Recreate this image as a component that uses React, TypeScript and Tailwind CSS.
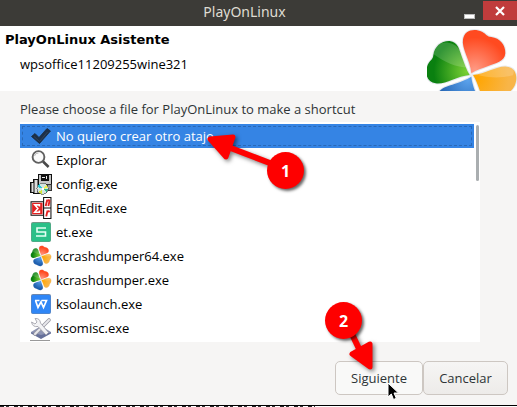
import { useState, type ReactNode } from "react";

const PETAL =
  "M154 160 C150 120 124 85 129 58 C133 30 162 24 186 35 C200 42 200 50 214 51 C240 54 257 75 256 100 C254 126 226 130 205 138 C186 145 170 150 154 160Z";

function Clover({ id, viewBox, className }: { id: string; viewBox: string; className: string }) {
  const petals = [
    { name: "red", angle: 0, near: "#ff9a84", far: "#ff4a20" },
    { name: "amber", angle: 90, near: "#ffa500", far: "#f8b548" },
    { name: "blue", angle: 180, near: "#5ba2ec", far: "#1f5fae" },
    { name: "green", angle: 270, near: "#7ad034", far: "#0a8010" },
  ];
  return (
    <svg viewBox={viewBox} className={className} aria-hidden="true">
      <defs>
        {petals.map((p) => (
          <radialGradient key={p.name} id={`${id}-${p.name}`} gradientUnits="userSpaceOnUse" cx="165" cy="150" r="115">
            <stop offset="0" stopColor={p.near} />
            <stop offset="0.85" stopColor={p.far} />
          </radialGradient>
        ))}
      </defs>
      {petals.map((p) => (
        <g key={p.name} transform={`rotate(${p.angle} 154 165)`}>
          <path d={PETAL} fill="none" stroke="#e6e9ee" strokeWidth="6" />
          <path d={PETAL} fill={`url(#${id}-${p.name})`} />
        </g>
      ))}
      <path d="M40 102 C75 128 110 142 143 143 C137 112 120 82 98 72 C76 62 46 68 40 92Z" fill="#fff" opacity=".17" />
      <path d="M165 163 C210 176 250 174 279 166 C288 142 268 132 245 138 C218 144 190 154 165 163Z" fill="#fff" opacity=".17" />
    </svg>
  );
}

const iconClass = "size-[22px] shrink-0";

const CheckIcon = () => (
  <svg viewBox="0 0 22 22" className={iconClass} aria-hidden="true">
    <path d="M1.500 11.500 L5 8.500 L9 12.500 L17 3.500 L20.500 6 L9.500 18.500Z" fill="#1d3047" stroke="#1b2a3c" strokeWidth=".8" />
    <path d="M4 11.500 L9.500 16.500 L17.500 7" fill="none" stroke="#30435b" strokeWidth="1" />
  </svg>
);

const SearchIcon = () => (
  <svg viewBox="0 0 22 22" className={iconClass} aria-hidden="true">
    <circle cx="8.500" cy="8" r="5.900" fill="#fafafa" stroke="#606060" strokeWidth="1.900" />
    <path d="M13 12.500 L18.600 18" stroke="#494949" strokeWidth="2.600" />
    <path d="M4.500 7 A4 4 0 0 1 8.500 4" fill="none" stroke="#bbb" />
  </svg>
);

const SetupIcon = () => (
  <svg viewBox="0.500 0 21 21" className={iconClass} aria-hidden="true" shapeRendering="crispEdges">
    <path d="M1 9h3V6h6v14H4v-1H1z" fill="#777" stroke="#111" strokeWidth="1" />
    <path d="M2 10h1v8H2zM5 7h2v12H5z" fill="#ddd" />
    <path d="M9 1h12v10H9z" fill="#c5c5c5" stroke="#111" strokeWidth="1" />
    <path d="M11 2h8v6h-8z" fill="#111" />
    <path d="M12 4h3v1h-3zM16 3h1v3h-1z" fill="#eee" />
    <path d="M17 11h4v6h-4z" fill="#999" stroke="#333" strokeWidth="1" />
    <circle cx="12.500" cy="15" r="5.400" fill="#d3e6df" stroke="#444" strokeWidth=".6" />
    <path d="M12.500 15 L7.500 13.500 L9.500 10.500Z" fill="#28c7d8" />
    <path d="M12.500 15 L16.500 11.500 L17.500 14.500Z" fill="#eef24a" />
    <path d="M12.500 15 L8.500 18.500 L11.500 20Z" fill="#d8e63a" />
    <path d="M12.500 15 L16.500 18.500 L17.500 15.500Z" fill="#29b98f" />
    <path d="M12 14h2v2h-2z" fill="#fff" />
  </svg>
);

const EquationIcon = () => (
  <svg viewBox="0.500 0 21 21" className={iconClass} aria-hidden="true">
    <path d="M1.500 4.500h12v13h-12z" fill="#fff" stroke="#111" />
    <path d="M2.500 5.500h10v11h-10z" fill="#e32222" />
    <path d="M9.500 9V7.500H5L8 11 5 14.500H9.500V13" fill="none" stroke="#fff" strokeWidth="1.500" />
    <path d="M13.500 .5h7v10h-7zM13.500 10.500h7v10h-7z" fill="#fff" stroke="#111" />
    <path d="M15.500 8.500l1.500-6M16.500 4q3-2 2.500 .5l-1 4M16 18.500l1.200-5.500M16.800 14.500q1-1.500 2.500-.5" fill="none" stroke="#e32222" strokeWidth="1.800" />
  </svg>
);

const SheetIcon = () => (
  <svg viewBox="0 0 22 22" className={iconClass} aria-hidden="true">
    <rect x="1" y="1" width="20" height="20" rx="2" fill="#6e9a87" />
    <rect x="1.500" y="2" width="19" height="18.500" rx="1.500" fill="#2bc088" />
    <path d="M16 7H7v4h8.500v4H6" fill="none" stroke="#e6fff4" strokeWidth="1.600" />
  </svg>
);

const WriterIcon = () => (
  <svg viewBox="0 0 22 22" className={iconClass} aria-hidden="true">
    <rect x="1" y="1" width="20" height="20" rx="2" fill="#6d87ac" />
    <rect x="1.500" y="2" width="19" height="18.500" rx="1.500" fill="#2f86f6" />
    <path d="M5 7.500h4.500M5.500 7.500L8 14.500 11 9l2.500 5.500L16.500 7.500H11.500" fill="none" stroke="#fff" strokeWidth="1.700" />
  </svg>
);

const ToolsIcon = () => (
  <svg viewBox="0 0 22 22" className={iconClass} aria-hidden="true">
    <path d="M1 15 L11 9 L21 15 L11 20Z" fill="#8e95b4" />
    <path d="M1 15 L11 18 L21 15 V16.500 L11 22 L1 16.500Z" fill="#66709a" />
    <path d="M19 3 L5 17" stroke="#9a9aa4" strokeWidth="3.600" strokeLinecap="round" />
    <path d="M19 3 L5 17" stroke="#e8e8ec" strokeWidth="2" strokeLinecap="round" />
    <path d="M5 1.500 Q10 1 10.500 6 L18.500 15.500 L16 18 L8 9.500 Q2.500 10.500 1.500 5 L5 7 L7 5Z" fill="#f3f3f5" stroke="#9a9aa4" strokeWidth=".8" />
  </svg>
);

const files: { name: string; icon: ReactNode }[] = [
  { name: "No quiero crear otro atajo", icon: <CheckIcon /> },
  { name: "Explorar", icon: <SearchIcon /> },
  { name: "config.exe", icon: <SetupIcon /> },
  { name: "EqnEdit.exe", icon: <EquationIcon /> },
  { name: "et.exe", icon: <SheetIcon /> },
  { name: "kcrashdumper64.exe", icon: <Clover id="dump64" viewBox="16 20 276 290" className={iconClass} /> },
  { name: "kcrashdumper.exe", icon: <Clover id="dump" viewBox="16 20 276 290" className={iconClass} /> },
  { name: "ksolaunch.exe", icon: <WriterIcon /> },
  { name: "ksomisc.exe", icon: <ToolsIcon /> },
];

function Marker({ label, className }: { label: string; className: string }) {
  return (
    <span
      className={`absolute flex size-[37px] items-center justify-center rounded-full bg-[#fe0000] font-['Noto_Sans',sans-serif] text-base font-bold text-white shadow-[2px_2px_3px_rgba(0,0,0,0.6)] ${className}`}
    >
      {label}
    </span>
  );
}

export default function App() {
  const [selected, setSelected] = useState(0);
  return (
    <div className="relative overflow-hidden bg-[#f6f5f4] font-['Open_Sans','Noto_Sans',sans-serif] text-[13px] leading-5 text-[#2e3436]">
      <header className="grid h-[26px] grid-cols-[1fr_auto_1fr] bg-[#3c3b37]">
        <span className="col-start-2 pr-7 font-['Noto_Sans',sans-serif] text-[14px] leading-6 text-[#dfdbd2]">PlayOnLinux</span>
        <div className="flex items-start justify-end">
          <button type="button" aria-label="Minimizar" className="flex h-5 w-[27px] items-end justify-center pt-3 pb-px">
            <span className="h-[5px] w-[11px] border border-[#bbb] bg-white" />
          </button>
          <button type="button" aria-label="Cerrar" className="mt-px flex h-[19px] w-[34px] items-center justify-center bg-[#c03c3c]">
            <svg viewBox="0 0 10 10" className="size-[10px]" aria-hidden="true">
              <path d="M1 1 L9 9 M9 1 L1 9" stroke="#fff" strokeWidth="2.200" />
            </svg>
          </button>
        </div>
      </header>

      <section className="flex h-[65px] justify-between bg-white text-black">
        <div className="pt-1 pl-[5px]">
          <h1 className="font-['DejaVu_Sans',sans-serif] text-[13px] font-bold">PlayOnLinux Asistente</h1>
          <p className="pt-1 pl-[15px]">wpsoffice11209255wine321</p>
        </div>
        <Clover id="logo" viewBox="21 18 270 195" className="h-[65px] w-[90px] shrink-0" />
      </section>

      <main className="px-5 pt-2">
        <p id="prompt" className="pb-[3px]">Please choose a file for PlayOnLinux to make a shortcut</p>
        <div className="mr-[17px] flex h-[220px] overflow-hidden bg-white pt-[2px]">
          <ul role="listbox" aria-labelledby="prompt" className="min-w-0 flex-1 text-black">
            {files.map((file, i) => (
              <li
                key={file.name}
                role="option"
                aria-selected={i === selected}
                onClick={() => setSelected(i)}
                className={
                  i === selected
                    ? "h-6 bg-[#3584e4] p-[2px] text-white"
                    : "h-6 p-[2px]"
                }
              >
                <div
                  className={
                    i === selected
                      ? "flex h-5 items-center gap-1 border border-dashed border-[#2a69b6] pl-[7px]"
                      : "flex h-5 items-center gap-1 border border-transparent pl-[7px]"
                  }
                >
                  {file.icon}
                  <span>{file.name}</span>
                </div>
              </li>
            ))}
            <li role="presentation" className="ml-[10px] h-px w-5 bg-[#999]" />
          </ul>
          <div className="w-[6px] pt-px pl-[2px]">
            <div className="h-14 w-[3px] rounded-full bg-[#aaaeb0]" />
          </div>
        </div>
      </main>

      <footer className="flex justify-end px-[9px] pt-[19px] pb-[10px]">
        <button type="button" className="h-[34px] w-[88px] rounded-[5px] border border-[#cdc7c2] bg-[#f9f9f8]">
          Siguiente
        </button>
        <button type="button" className="h-[34px] w-[85px] rounded-[5px] border border-[#cdc7c2] bg-linear-to-t from-[#edebe9] to-[#f6f5f4]">
          Cancelar
        </button>
      </footer>
      <div className="h-[2px] border-t border-black bg-white">
        <div className="h-px w-[315px] bg-[repeating-linear-gradient(90deg,#222_0_4px,#fff_4px_6px,#333_6px_9px,#fff_9px_14px)]" />
      </div>

      <svg viewBox="0 0 517 407" className="pointer-events-none absolute top-0 left-0 h-[407px] w-[517px] drop-shadow-[2px_2px_2px_rgba(0,0,0,0.5)]" aria-hidden="true">
        <g fill="#fe0000" stroke="#fe0000" strokeLinejoin="round">
          <path d="M228 147 L275 165" strokeWidth="6" />
          <path d="M210 139 L233 137 L226 157Z" strokeWidth="5" />
          <path d="M350 330 L362 355" strokeWidth="6" />
          <path d="M370 367 L352 354 L370 344Z" strokeWidth="5" />
        </g>
      </svg>
      <Marker label="1" className="top-[152px] left-[267px]" />
      <Marker label="2" className="top-[302px] left-[325px]" />
      <svg viewBox="0 0 13 19" className="pointer-events-none absolute top-[382px] left-[387px] h-[19px] w-[13px]" aria-hidden="true">
        <path d="M1 1 V15 L4.300 12 L6.500 17.500 L9.300 16.300 L7 11 H11.500Z" fill="#000" stroke="#fff" strokeWidth="1" />
      </svg>
    </div>
  );
}
